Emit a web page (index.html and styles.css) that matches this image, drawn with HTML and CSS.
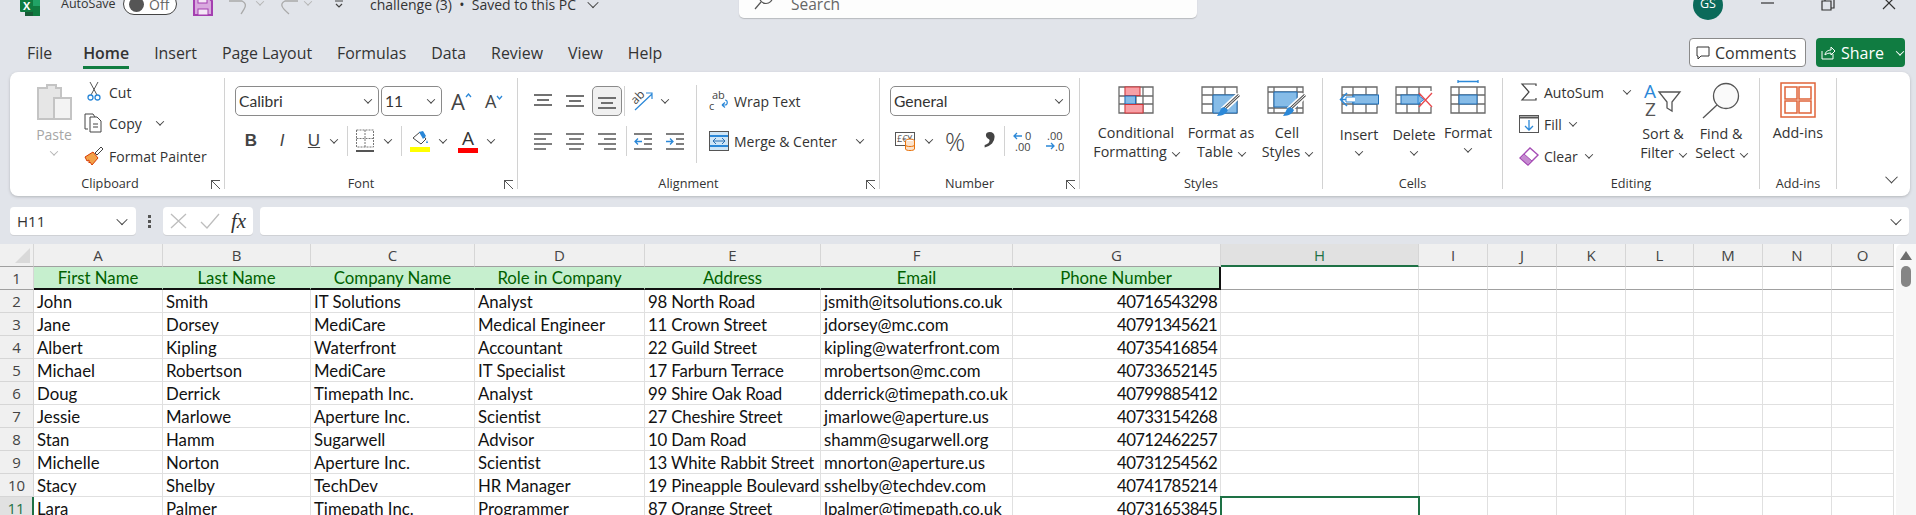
FILE: index.html
```html
<!DOCTYPE html>
<html lang="en">
<head>
  <meta charset="UTF-8" />
  <title>challenge (3) - Excel</title>
  <link rel="stylesheet" href="styles.css">
</head>
<body>
  <!-- title bar, cut off at the top of the window -->
  <div class="titlebar">
    <svg class="xl-logo" width="20" height="16" viewBox="0 0 20 16"><rect x="5" y="-4" width="15" height="20" rx="1" fill="#21a366"/><rect x="12" y="6" width="8" height="10" fill="#107c41"/><rect x="5" y="10" width="8" height="6" fill="#185c37"/><rect y="-2" width="13" height="14" rx="1" fill="#107c41"/><text x="3" y="10" font-size="11" font-weight="700" fill="#fff" font-family="Open Sans">X</text></svg>
    <span class="autosave">AutoSave</span>
    <span class="toggle"><i></i>Off</span>
    <svg class="save" width="20" height="16" viewBox="0 0 20 16"><path d="M1 -3h14l4 4v14H1z" fill="#d9a9df" stroke="#a43fb0" stroke-width="2"/><rect x="5" y="9" width="10" height="6" fill="#f4e6f6" stroke="#a43fb0"/><rect x="5" y="-3" width="9" height="6" fill="#f4e6f6" stroke="#a43fb0"/></svg>
    <svg class="undo" width="20" height="15" viewBox="0 0 20 15"><path d="M1 1h13c6 3 3 7-1 13" fill="none" stroke="#a9a9a9" stroke-width="1.3"/></svg>
    <span class="chev faded undo-chev"></span>
    <svg class="redo" width="21" height="15" viewBox="0 0 21 15"><path d="M20 1H7C1 4 4 8 11 14" fill="none" stroke="#a9a9a9" stroke-width="1.3"/></svg>
    <span class="chev faded redo-chev"></span>
    <svg class="customise" width="10" height="10" viewBox="0 0 10 10"><path d="M1 1h8M2 4l3 3 3-3" fill="none" stroke="#444" stroke-width="1.2"/></svg>
    <span class="doc-title">challenge (3) &nbsp;•&nbsp; Saved to this PC</span>
    <span class="chev title-chev"></span>
    <div class="searchbox">
      <svg width="20" height="18" viewBox="0 0 20 18"><circle cx="12" cy="3" r="6.5" fill="none" stroke="#555" stroke-width="1.2"/><path d="M7 8l-6 7" stroke="#555" stroke-width="1.2"/></svg>
      <span>Search</span>
    </div>
    <div class="avatar">GS</div>
    <svg class="win-min" width="14" height="6" viewBox="0 0 14 6"><path d="M0 3h13" stroke="#333" stroke-width="1.2"/></svg>
    <svg class="win-max" width="14" height="12" viewBox="0 0 14 12"><path d="M3 -1v-1M1 1h9v9H1z M4 1V-1h9v9h-3" transform="translate(0 1)" fill="none" stroke="#333" stroke-width="1.2"/></svg>
    <svg class="win-close" width="14" height="12" viewBox="0 0 14 12"><path d="M1 -2l12 12M13 -2L1 10" stroke="#333" stroke-width="1.2"/></svg>
  </div>

  <!-- tabs -->
  <div class="tabrow">
    <a class="tab t-file">File</a>
    <a class="tab t-home active">Home</a>
    <a class="tab">Insert</a>
    <a class="tab">Page Layout</a>
    <a class="tab">Formulas</a>
    <a class="tab">Data</a>
    <a class="tab">Review</a>
    <a class="tab">View</a>
    <a class="tab">Help</a>
    <button class="comments">
      <svg width="14" height="14" viewBox="0 0 14 14"><path d="M1 1h12v9H5l-3 3v-3H1z" fill="none" stroke="#333"/></svg>Comments
    </button>
    <button class="share">
      <svg width="15" height="15" viewBox="0 0 15 15"><path d="M1 6v8h11V9M4 10c0-3 3-5 6-5V2l4 4-4 4V8c-3 0-5 1-6 2z" fill="none" stroke="#fff"/></svg>Share<span class="chev light"></span>
    </button>
  </div>

  <!-- ribbon -->
  <div class="ribbon">
    <section class="group g-clipboard">
      <div class="group-body clip-body">
        <div class="paste">
          <svg width="34" height="36" viewBox="0 0 34 36"><path d="M1 5h9V2h9v3h5v31H1z" fill="#e6e6e6" stroke="#c4c4c4" stroke-width="2"/><rect x="17" y="15" width="17" height="21" fill="#f3f3f3" stroke="#c4c4c4" stroke-width="2"/></svg>
          <span>Paste</span>
          <span class="chev faded"></span>
        </div>
        <div class="clip-col">
          <div class="row"><svg class="cut-ico" width="14" height="19" viewBox="0 0 14 19"><path d="M3 0l7 13M11 0L4 13" stroke="#555" fill="none"/><circle cx="3.5" cy="15.5" r="2.5" fill="none" stroke="#2b88d8" stroke-width="1.3"/><circle cx="10.5" cy="15.5" r="2.5" fill="none" stroke="#2b88d8" stroke-width="1.3"/></svg><span>Cut</span></div>
          <div class="row"><svg width="20" height="20" viewBox="0 0 20 20"><path d="M4 16H1V1h8l2 3" fill="none" stroke="#444"/><path d="M6 4h7l4 4v11H6z" fill="#fff" stroke="#444"/><path d="M9 11h5M9 14h5" stroke="#444"/></svg><span>Copy</span><span class="chev copy-chev"></span></div>
          <div class="row"><svg width="20" height="20" viewBox="0 0 20 20"><path d="M1 11l8-5 5 6-6 7-2-3-1 1 0-3-2 1z" fill="#f2a24a" stroke="#d83b01"/><path d="M11 7l6-6 2 2-6 6z" fill="none" stroke="#444"/></svg><span>Format Painter</span></div>
        </div>
      </div>
      <div class="group-label">Clipboard</div>
      <span class="launcher"></span>
    </section>

    <section class="group g-font">
      <div class="group-body stack">
        <div class="row ctl-row">
          <div class="select font-name">Calibri<span class="chev"></span></div>
          <div class="select font-size">11<span class="chev"></span></div>
          <span class="size-btn big-a">A<svg width="7" height="5" viewBox="0 0 7 5"><path d="M1 4l2.5-3L6 4" fill="none" stroke="#2b88d8" stroke-width="1.3"/></svg></span>
          <span class="size-btn small-a">A<svg width="7" height="5" viewBox="0 0 7 5"><path d="M1 1l2.5 3L6 1" fill="none" stroke="#2b88d8" stroke-width="1.3"/></svg></span>
        </div>
        <div class="row ctl-row font-fmt">
          <b class="fmt fmt-b">B</b>
          <i class="fmt fmt-i">I</i>
          <u class="fmt fmt-u">U</u>
          <span class="chev"></span>
          <span class="vsep"></span>
          <svg class="borders" width="18" height="24" viewBox="0 0 18 24"><path d="M.5 1h17v17H.5zM9 1v17M.5 9.500h17" fill="none" stroke="#777" stroke-dasharray="2 1"/><path d="M0 22h18" stroke="#555" stroke-width="2"/></svg>
          <span class="chev"></span>
          <span class="vsep"></span>
          <div class="color-btn">
            <svg width="18" height="14" viewBox="0 0 18 14"><path d="M2 7l7-6 6 7-5 5z" fill="#fff" stroke="#444"/><path d="M8 1l4-1 3 5-3 3z" fill="#2b88d8"/><path d="M16 9l1 3h-2z" fill="#2b88d8"/></svg>
            <span class="bar yellow"></span>
          </div>
          <span class="chev"></span>
          <div class="color-btn font-color">
            <span class="color-a">A</span>
            <span class="bar red"></span>
          </div>
          <span class="chev"></span>
        </div>
      </div>
      <div class="group-label">Font</div>
      <span class="launcher"></span>
    </section>

    <section class="group g-align">
      <div class="group-body align-body">
        <div class="stack align-left">
          <div class="row ctl-row">
            <svg class="ln" width="18" height="16" viewBox="0 0 18 16"><path d="M0 2h18M3 7h12M0 12h18" stroke="#444" stroke-width="1.300"/></svg>
            <svg class="ln" width="18" height="16" viewBox="0 0 18 16"><path d="M0 3h18M3 8h12M0 13h18" stroke="#444" stroke-width="1.300"/></svg>
            <span class="pressed"><svg width="18" height="16" viewBox="0 0 18 16"><path d="M0 5h18M3 10h12M0 15h18" stroke="#444" stroke-width="1.300"/></svg></span>
            <span class="vsep"></span>
            <svg class="orient" width="21" height="20" viewBox="0 0 21 20"><text x="1" y="10" font-size="12" fill="#444" font-family="Open Sans" transform="rotate(-45 7 9)">ab</text><path d="M3 19L20 3M14 2h6v6" fill="none" stroke="#2b88d8" stroke-width="1.200"/></svg>
            <span class="chev"></span>
          </div>
          <div class="row ctl-row">
            <svg class="ln" width="18" height="18" viewBox="0 0 18 18"><path d="M0 2h18M0 7h12M0 12h18M0 17h12" stroke="#555" stroke-width="1.300"/></svg>
            <svg class="ln" width="18" height="18" viewBox="0 0 18 18"><path d="M0 2h18M3 7h12M0 12h18M3 17h12" stroke="#555" stroke-width="1.300"/></svg>
            <svg class="ln" width="18" height="18" viewBox="0 0 18 18"><path d="M0 2h18M6 7h12M0 12h18M6 17h12" stroke="#555" stroke-width="1.300"/></svg>
            <span class="vsep"></span>
            <svg class="dent" width="18" height="18" viewBox="0 0 18 18"><path d="M0 2h18M10 7h8M10 12h8M0 17h18" stroke="#555" stroke-width="1.300"/><path d="M8 9.500H1M4 6.500L1 9.500l3 3" fill="none" stroke="#2b88d8" stroke-width="1.300"/></svg>
            <svg class="dent" width="18" height="18" viewBox="0 0 18 18"><path d="M0 2h18M10 7h8M10 12h8M0 17h18" stroke="#555" stroke-width="1.300"/><path d="M0 9.500h7M4 6.500l3 3-3 3" fill="none" stroke="#2b88d8" stroke-width="1.300"/></svg>
          </div>
        </div>
        <span class="vsep tall"></span>
        <div class="wrap-col">
          <div class="row wrap-row"><svg width="20" height="22" viewBox="0 0 20 22"><text x="3" y="9" font-size="11" fill="#444" font-family="Open Sans">ab</text><text x="0" y="20" font-size="11" fill="#444" font-family="Open Sans">c</text><path d="M13 15h3c3 0 3-5 0-5M13 15l3-2.500M13 15l3 2.500" fill="none" stroke="#2b88d8" stroke-width="1.200"/></svg><span>Wrap Text</span></div>
          <div class="row wrap-row"><svg width="20" height="20" viewBox="0 0 20 20"><rect x=".5" y=".5" width="19" height="19" fill="#cfe6f7" stroke="#555"/><path d="M1 5h18M1 15h18" stroke="#2b88d8" stroke-width="2"/><path d="M4 10h12M7 7l-3 3 3 3M13 7l3 3-3 3" fill="none" stroke="#2b6fb0"/></svg><span>Merge &amp; Center</span><span class="chev merge-chev"></span></div>
        </div>
      </div>
      <div class="group-label">Alignment</div>
      <span class="launcher"></span>
    </section>

    <section class="group g-number">
      <div class="group-body stack">
        <div class="row ctl-row"><div class="select number-format">General<span class="chev"></span></div></div>
        <div class="row ctl-row num-fmt">
          <svg width="21" height="20" viewBox="0 0 21 20"><rect x=".5" y="1.500" width="19" height="13" fill="#fff" stroke="#555"/><text x="2" y="11" font-size="9" fill="#555" font-family="Open Sans">£€¥</text><ellipse cx="15" cy="10" rx="4.500" ry="2" fill="#fff" stroke="#e8730c"/><path d="M10.500 10v8c0 2 9 2 9 0v-8M10.500 14c0 2 9 2 9 0" fill="#fbe3cd" stroke="#e8730c"/></svg>
          <span class="chev"></span>
          <span class="percent">%</span>
          <span class="comma">,</span>
          <span class="vsep"></span>
          <svg width="20" height="22" viewBox="0 0 20 22"><path d="M9 6H1M4 3L1 6l3 3" fill="none" stroke="#2b88d8" stroke-width="1.300"/><text x="12" y="10" font-size="11" fill="#444" font-family="Open Sans">0</text><text x="2" y="21" font-size="11" fill="#444" font-family="Open Sans">.00</text></svg>
          <svg width="20" height="22" viewBox="0 0 20 22"><text x="2" y="10" font-size="11" fill="#444" font-family="Open Sans">.00</text><path d="M1 16h8M6 13l3 3-3 3" fill="none" stroke="#2b88d8" stroke-width="1.300"/><text x="10" y="21" font-size="11" fill="#444" font-family="Open Sans">.0</text></svg>
        </div>
      </div>
      <div class="group-label">Number</div>
      <span class="launcher"></span>
    </section>

    <section class="group g-styles">
      <div class="group-body bigs">
        <div class="big w-cond">
          <svg width="36" height="28" viewBox="0 0 36 28"><path d="M1 1h34v26H1zM1 10h34M1 18h34M7.500 1v26M18 1v26M25 1v26" fill="none" stroke="#6a6a6a" stroke-width="1.300"/><rect x="7" y="1" width="15" height="8.500" fill="#f8a0a6" stroke="#d13438"/><rect x="7" y="10" width="10.500" height="8" fill="#86bce8" stroke="#1f6fb8"/><rect x="7" y="18.500" width="18" height="8.500" fill="#f8a0a6" stroke="#d13438"/></svg>
          <p>Conditional<br>Formatting<span class="chev"></span></p>
        </div>
        <div class="big w-table">
          <svg width="40" height="34" viewBox="0 0 40 34"><path d="M1 1h35v26H1zM1 9h35M1 18h35M12 1v26M24 1v26" fill="none" stroke="#6a6a6a" stroke-width="1.300"/><path d="M12 9h24v18H12z" fill="#86bce8" stroke="#1f6fb8"/><path d="M38 9L22 24" stroke="#fff" stroke-width="6"/><path d="M38 9L23 23" stroke="#555" stroke-width="3"/><path d="M38 9L23 23" stroke="#fff" stroke-width="1"/><path d="M25 22c-3-2-5 0-6 3l-3 5c6 0 10-3 11-6z" fill="#2b88d8"/></svg>
          <p>Format as<br>Table<span class="chev"></span></p>
        </div>
        <div class="big w-cell">
          <svg width="40" height="34" viewBox="0 0 40 34"><path d="M1 1h35v26H1zM1 6h35M1 22h35M7 1v26M30 1v26" fill="none" stroke="#6a6a6a" stroke-width="1.300"/><path d="M7 6h23v15H7z" fill="#86bce8" stroke="#1f6fb8"/><path d="M38 9L22 24" stroke="#fff" stroke-width="6"/><path d="M38 9L23 23" stroke="#555" stroke-width="3"/><path d="M38 9L23 23" stroke="#fff" stroke-width="1"/><path d="M25 22c-3-2-5 0-6 3l-3 5c6 0 10-3 11-6z" fill="#2b88d8"/></svg>
          <p>Cell<br>Styles<span class="chev"></span></p>
        </div>
      </div>
      <div class="group-label">Styles</div>
    </section>

    <section class="group g-cells">
      <div class="group-body bigs">
        <div class="big w-insert">
          <svg class="cell-ico" width="40" height="28" viewBox="0 0 40 28"><path d="M3 1h35v26H3zM3 9h35M3 18h35M14 1v26M27 1v26" fill="none" stroke="#6a6a6a" stroke-width="1.300"/><rect x="14" y="9" width="25.500" height="9" fill="#86bce8" stroke="#1f6fb8"/><path d="M16 13.500H2M8 7l-6.500 6.500L8 20" fill="none" stroke="#2b88d8" stroke-width="1.500"/><path d="M16 11H7v5h9" fill="#fff" stroke="#2b88d8"/></svg>
          <p class="low">Insert</p>
          <span class="chev under"></span>
        </div>
        <div class="big w-delete">
          <svg class="cell-ico" width="38" height="28" viewBox="0 0 38 28"><path d="M1 1h35v26H1zM1 9h35M1 18h35M12 1v26M24 1v26" fill="none" stroke="#6a6a6a" stroke-width="1.300"/><rect x="6" y="9" width="18" height="9" fill="#86bce8" stroke="#1f6fb8"/><rect x="26" y="5" width="12" height="16" fill="#fff"/><path d="M23 9l6 4.500-6 4.500z" fill="#86bce8" stroke="#2b88d8"/><path d="M24 7l13 14M37 7L24 21" stroke="#e8484d" stroke-width="1.300"/></svg>
          <p class="low">Delete</p>
          <span class="chev under"></span>
        </div>
        <div class="big w-format">
          <svg class="format-ico" width="36" height="34" viewBox="0 0 36 34"><path d="M8 1.500h20M8 0v3M28 0v3" stroke="#2b88d8" stroke-width="1.300" fill="none"/><path d="M1 7h34v26H1zM1 15h34M1 24h34M9 7v26M27 7v26" fill="none" stroke="#6a6a6a" stroke-width="1.300"/><rect x="9" y="15" width="18" height="9" fill="#86bce8" stroke="#1f6fb8"/></svg>
          <p>Format</p>
          <span class="chev under2"></span>
        </div>
      </div>
      <div class="group-label">Cells</div>
    </section>

    <section class="group g-editing">
      <div class="group-body edit-body">
        <div class="edit-col">
          <div class="row"><svg width="20" height="18" viewBox="0 0 20 18"><path d="M17 3V1H3l7 8-7 8h14v-2" fill="none" stroke="#444" stroke-width="1.200"/></svg><span>AutoSum</span><span class="chev sum-chev"></span></div>
          <div class="row"><svg width="20" height="18" viewBox="0 0 20 18"><rect x=".5" y=".5" width="19" height="17" fill="#fff" stroke="#555"/><path d="M0 2.500h20" stroke="#555" stroke-width="2"/><path d="M10 5v10M6 11l4 4 4-4" fill="none" stroke="#2b88d8" stroke-width="1.300"/></svg><span>Fill</span><span class="chev inline-chev"></span></div>
          <div class="row"><svg width="20" height="20" viewBox="0 0 20 20"><path d="M1 12L11 2l8 7-10 10z" fill="#fff" stroke="#a64db5" stroke-width="1.400"/><path d="M1 12l4-4 8 7-4 4z" fill="#c58ad0" stroke="#a64db5"/></svg><span>Clear</span><span class="chev inline-chev"></span></div>
        </div>
        <div class="big w-sort">
          <svg width="36" height="36" viewBox="0 0 36 36"><text x="0" y="15" font-size="19" fill="#2b88d8" font-family="Open Sans">A</text><text x="1" y="33" font-size="19" fill="#555" font-family="Open Sans">Z</text><path d="M15 9h21l-8 10v9l-5-3v-6z" fill="#fff" stroke="#555" stroke-width="1.300"/></svg>
          <p>Sort &amp;<br>Filter<span class="chev"></span></p>
        </div>
        <div class="big w-find">
          <svg width="38" height="36" viewBox="0 0 38 36"><circle cx="24" cy="13" r="12.500" fill="#fafafa" stroke="#555" stroke-width="1.300"/><path d="M15 22L1 35" stroke="#555" stroke-width="1.300"/></svg>
          <p>Find &amp;<br>Select<span class="chev"></span></p>
        </div>
      </div>
      <div class="group-label">Editing</div>
    </section>

    <section class="group g-addins">
      <div class="group-body bigs center">
        <div class="big">
          <svg class="addins-ico" width="36" height="36" viewBox="0 0 36 36"><path d="M1 1h34v34H1z" fill="none" stroke="#e0643a" stroke-width="1.500"/><path d="M5 5h12v12H5zM19 5h12v12H19zM5 19h12v12H5zM19 19h12v12H19z" fill="none" stroke="#e0643a" stroke-width="1.500"/></svg>
          <p>Add-ins</p>
        </div>
      </div>
      <div class="group-label">Add-ins</div>
    </section>

    <div class="collapse"><span class="chev wide"></span></div>
  </div>

  <!-- formula bar -->
  <div class="formulabar">
    <div class="namebox">H11<span class="chev dark"></span></div>
    <div class="grip"><i></i><i></i><i></i></div>
    <div class="fx-box">
      <svg width="18" height="16" viewBox="0 0 18 16"><path d="M1 1l15 14M16 1L1 15" stroke="#bdbdbd" stroke-width="1.300"/></svg>
      <svg width="20" height="16" viewBox="0 0 20 16"><path d="M1 9l6 6L19 1" fill="none" stroke="#bdbdbd" stroke-width="1.300"/></svg>
      <span class="fx">fx</span>
    </div>
    <div class="formula-input"><span class="chev dark"></span></div>
  </div>

  <!-- sheet -->
  <div class="sheet">
    <table class="grid">
      <colgroup>
        <col class="c-head"><col class="c-a"><col class="c-b"><col class="c-c"><col class="c-d"><col class="c-e"><col class="c-f"><col class="c-g"><col class="c-h"><col class="c-n"><col class="c-n"><col class="c-n"><col class="c-l"><col class="c-n"><col class="c-n"><col class="c-o">
      </colgroup>
      <tr class="letters">
        <th class="corner"><span></span></th><th>A</th><th>B</th><th>C</th><th>D</th><th>E</th><th>F</th><th>G</th><th class="sel-col">H</th><th>I</th><th>J</th><th>K</th><th>L</th><th>M</th><th>N</th><th>O</th>
      </tr>
      <tr class="head-row">
        <th>1</th><td class="good">First Name</td><td class="good">Last Name</td><td class="good">Company Name</td><td class="good">Role in Company</td><td class="good">Address</td><td class="good">Email</td><td class="good last">Phone Number</td><td></td><td></td><td></td><td></td><td></td><td></td><td></td><td></td>
      </tr>
      <tr><th>2</th><td>John</td><td>Smith</td><td>IT Solutions</td><td>Analyst</td><td class="addr">98 North Road</td><td>jsmith@itsolutions.co.uk</td><td class="num">40716543298</td><td></td><td></td><td></td><td></td><td></td><td></td><td></td><td></td></tr>
      <tr><th>3</th><td>Jane</td><td>Dorsey</td><td>MediCare</td><td>Medical Engineer</td><td class="addr">11 Crown Street</td><td>jdorsey@mc.com</td><td class="num">40791345621</td><td></td><td></td><td></td><td></td><td></td><td></td><td></td><td></td></tr>
      <tr><th>4</th><td>Albert</td><td>Kipling</td><td>Waterfront</td><td>Accountant</td><td class="addr">22 Guild Street</td><td>kipling@waterfront.com</td><td class="num">40735416854</td><td></td><td></td><td></td><td></td><td></td><td></td><td></td><td></td></tr>
      <tr><th>5</th><td>Michael</td><td>Robertson</td><td>MediCare</td><td>IT Specialist</td><td class="addr">17 Farburn Terrace</td><td>mrobertson@mc.com</td><td class="num">40733652145</td><td></td><td></td><td></td><td></td><td></td><td></td><td></td><td></td></tr>
      <tr><th>6</th><td>Doug</td><td>Derrick</td><td>Timepath Inc.</td><td>Analyst</td><td class="addr">99 Shire Oak Road</td><td>dderrick@timepath.co.uk</td><td class="num">40799885412</td><td></td><td></td><td></td><td></td><td></td><td></td><td></td><td></td></tr>
      <tr><th>7</th><td>Jessie</td><td>Marlowe</td><td>Aperture Inc.</td><td>Scientist</td><td class="addr">27 Cheshire Street</td><td>jmarlowe@aperture.us</td><td class="num">40733154268</td><td></td><td></td><td></td><td></td><td></td><td></td><td></td><td></td></tr>
      <tr><th>8</th><td>Stan</td><td>Hamm</td><td>Sugarwell</td><td>Advisor</td><td class="addr">10 Dam Road</td><td>shamm@sugarwell.org</td><td class="num">40712462257</td><td></td><td></td><td></td><td></td><td></td><td></td><td></td><td></td></tr>
      <tr><th>9</th><td>Michelle</td><td>Norton</td><td>Aperture Inc.</td><td>Scientist</td><td class="addr">13 White Rabbit Street</td><td>mnorton@aperture.us</td><td class="num">40731254562</td><td></td><td></td><td></td><td></td><td></td><td></td><td></td><td></td></tr>
      <tr><th>10</th><td>Stacy</td><td>Shelby</td><td>TechDev</td><td>HR Manager</td><td class="addr">19 Pineapple Boulevard</td><td>sshelby@techdev.com</td><td class="num">40741785214</td><td></td><td></td><td></td><td></td><td></td><td></td><td></td><td></td></tr>
      <tr><th class="sel-row">11</th><td>Lara</td><td>Palmer</td><td>Timepath Inc.</td><td>Programmer</td><td class="addr">87 Orange Street</td><td>lpalmer@timepath.co.uk</td><td class="num">40731653845</td><td class="selected"></td><td></td><td></td><td></td><td></td><td></td><td></td><td></td></tr>
    </table>
    <div class="vscroll">
      <svg width="12" height="9" viewBox="0 0 12 9"><path d="M6 0l6 9H0z" fill="#6e6e6e"/></svg>
      <span class="thumb"></span>
    </div>
  </div>
</body>
</html>
```

FILE: styles.css
```css
* {
  box-sizing: border-box;
}
html, body {
  margin: 0;
  height: 515px;
  overflow: hidden;
}
body {
  width: 1916px;
  background-color: #e1e4ea;
  font-family: "Open Sans", "Noto Sans", sans-serif;
  font-size: 14px;
  color: #333;
}
p {
  margin: 0;
}
svg {
  display: block;
  flex: none;
  overflow: visible;
}

/* small chevrons are used all over the ribbon */
.chev {
  display: inline-block;
  flex: none;
  width: 6px;
  height: 6px;
  border-right: 1.3px solid #444;
  border-bottom: 1.3px solid #444;
  transform: rotate(45deg) translate(-1px, -1px);
}
.chev.faded {
  border-color: #b5b5b5;
}
.chev.light {
  border-color: #fff;
  margin-left: 8px;
}
.chev.wide {
  width: 9px;
  height: 9px;
}
.chev.dark {
  width: 8px;
  height: 8px;
}

/* title bar */
.titlebar {
  display: flex;
  align-items: flex-start;
  height: 24px;
  padding-left: 20px;
  overflow: hidden;
}
.autosave {
  margin: -5px 0 0 21px;
  width: 62px;
  font-size: 12.5px;
}
.toggle {
  display: flex;
  align-items: center;
  width: 54px;
  height: 22px;
  margin-top: -7px;
  padding-left: 5px;
  border: 1px solid #444;
  border-radius: 11px;
  background: #fff;
  font-size: 14px;
  color: #666;
}
.toggle i {
  width: 15px;
  height: 15px;
  border-radius: 50%;
  background: #555;
  margin-right: 5px;
}
.save {
  margin-left: 16px;
}
.undo {
  margin-left: 15px;
}
.undo-chev {
  margin: 0 0 0 9px;
}
.redo {
  margin-left: 15px;
}
.redo-chev {
  margin-left: 6px;
}
.customise {
  margin: 0 0 0 23px;
}
.doc-title {
  margin: -5px 0 0 26px;
  width: 215px;
  font-size: 14px;
  white-space: nowrap;
}
.title-chev {
  margin: 0 0 0 4px;
  width: 8px;
  height: 8px;
}
.searchbox {
  display: flex;
  align-items: flex-start;
  width: 458px;
  height: 24px;
  margin-left: 142px;
  margin-top: -6px;
  padding: 0 0 0 15px;
  background: #fdfdfd;
  border-radius: 0 0 5px 5px;
  box-shadow: 0 1px 1px #b9bbbf;
  color: #666;
}
.searchbox span {
  margin: -1px 0 0 17px;
  font-size: 15.5px;
}
.avatar {
  width: 30px;
  height: 30px;
  margin: -10px 0 0 496px;
  padding-top: 5px;
  border-radius: 50%;
  background: #0b6a5a;
  color: #fff;
  text-align: center;
  font-size: 12.5px;
}
.win-min {
  margin: 0 0 0 38px;
}
.win-max {
  margin: -1px 0 0 46px;
}
.win-close {
  margin: -1px 0 0 47px;
}

/* tabs */
.tabrow {
  display: flex;
  align-items: flex-start;
  gap: 25px;
  height: 48px;
  padding: 14px 11px 0 27px;
}
.tab {
  height: 31px;
  line-height: 31px;
  font-size: 15.9px;
  color: #333;
}
.tab.t-home {
  margin-left: 6px;
  border-bottom: 3px solid #107c41;
  font-weight: 600;
}
.comments, .share {
  display: flex;
  align-items: center;
  height: 29px;
  border-radius: 4px;
  font: 16px "Open Sans", sans-serif;
}
.comments {
  width: 117px;
  margin-left: auto;
  padding: 0 0 0 6px;
  gap: 5px;
  background: #fff;
  border: 1px solid #8a8a8a;
  color: #333;
}
.share {
  width: 89px;
  margin-left: -15px;
  padding: 0 0 0 5px;
  gap: 5px;
  background: #107c41;
  border: none;
  color: #fff;
}

/* ribbon */
.ribbon {
  display: flex;
  width: 1900px;
  height: 124px;
  margin-left: 10px;
  padding-top: 6px;
  background: #fff;
  border-radius: 8px;
  box-shadow: 0 1px 3px #b4b6ba;
}
.group {
  position: relative;
  display: flex;
  flex-direction: column;
  flex: none;
  height: 111px;
  border-right: 1px solid #d2d2d2;
}
.g-clipboard { width: 215px; }
.g-font { width: 293px; }
.g-align { width: 362px; }
.g-number { width: 200px; }
.g-styles { width: 243px; }
.g-cells { width: 180px; }
.g-editing { width: 257px; }
.g-addins { width: 77px; }
.group-body {
  flex: 1;
}
.group-label {
  height: 14px;
  line-height: 16px;
  text-align: center;
  font-size: 12.7px;
  color: #333;
  padding-right: 20px;
}
.g-clipboard .group-label { padding-right: 14px; }
.g-styles .group-label, .g-cells .group-label, .g-editing .group-label, .g-addins .group-label { padding-right: 0; }
/* the little corner arrow of a group sits over its bottom right corner */
.launcher {
  position: absolute;
  right: 4px;
  bottom: 0;
  width: 9px;
  height: 9px;
  border-top: 1px solid #555;
  border-left: 1px solid #555;
  background: linear-gradient(45deg, transparent 44%, #555 44%, #555 56%, transparent 56%);
}
.row {
  display: flex;
  align-items: center;
}
.vsep {
  flex: none;
  width: 1px;
  height: 30px;
  background: #d2d2d2;
}
.vsep.tall {
  height: 78px;
  margin: 7px 0 0 0;
}

/* clipboard */
.clip-body {
  display: flex;
}
.paste {
  display: flex;
  flex-direction: column;
  align-items: center;
  width: 34px;
  margin: 5px 0 0 27px;
  color: #a6a6a6;
}
.paste span:nth-child(2) {
  margin-top: 6px;
}
.paste .chev {
  margin-top: 6px;
}
.clip-col {
  display: flex;
  flex-direction: column;
  gap: 3px;
  margin-left: 13px;
}
.clip-col .row {
  height: 28px;
  gap: 5px;
  white-space: nowrap;
}
.clip-col .row:last-child {
  margin-top: 2px;
}
.cut-ico {
  margin: -1px 3px 0 3px;
}
.copy-chev {
  margin-left: 10px;
}

/* font */
.stack {
  display: flex;
  flex-direction: column;
  gap: 10px;
  padding-top: 8px;
}
.ctl-row {
  height: 30px;
}
.select {
  display: flex;
  align-items: center;
  justify-content: space-between;
  height: 30px;
  padding: 0 7px 0 3px;
  background: #fff;
  border: 1px solid #8a8a8a;
  border-radius: 5px;
  font-family: "Lato", sans-serif;
  font-size: 15.6px;
}
.font-name {
  width: 144px;
  margin-left: 10px;
}
.font-size {
  width: 61px;
  margin-left: 2px;
}
.size-btn {
  display: flex;
  align-items: flex-start;
  line-height: 1;
  color: #444;
}
.size-btn svg {
  margin-top: 3px;
}
.big-a {
  margin-left: 9px;
  font-size: 22px;
}
.small-a {
  margin-left: 13px;
  font-size: 18px;
}
.font-fmt .fmt {
  width: 14px;
  text-align: center;
  font-family: "Liberation Sans", sans-serif;
  font-size: 17px;
  color: #444;
}
.fmt-b {
  margin-left: 19px;
}
.fmt-i {
  margin-left: 17px;
  font-family: "Liberation Serif", serif;
}
.fmt-u {
  margin-left: 18px;
}
.font-fmt .fmt-u + .chev {
  margin-left: 10px;
}
.font-fmt .vsep {
  margin: 0 8px 0 10px;
}
.font-fmt .borders + .chev {
  margin-left: 11px;
}
.color-btn {
  display: flex;
  flex-direction: column;
  align-items: center;
  width: 20px;
  gap: 2px;
}
.font-fmt .color-btn + .chev {
  margin-left: 10px;
}
.font-color {
  margin-left: 12px;
}
.color-a {
  height: 16px;
  line-height: 16px;
  font-size: 19px;
}
.bar {
  width: 20px;
  height: 5px;
}
.bar.yellow {
  background: #ffff00;
}
.bar.red {
  background: #ff0000;
}

/* alignment */
.align-body {
  display: flex;
}
.align-left {
  width: 178px;
  padding-left: 16px;
}
.align-left .ln {
  margin-right: 14px;
}
.pressed {
  display: flex;
  align-items: center;
  justify-content: center;
  width: 30px;
  height: 30px;
  margin-left: -6px;
  background: #f0f0f0;
  border: 1px solid #8a8a8a;
  border-radius: 5px;
}
.align-left .vsep {
  margin: 0 7px 0 2px;
}
.align-left .ln:nth-of-type(3) {
  margin-right: 8px;
}
.orient + .chev {
  margin-left: 9px;
}
.dent {
  margin-right: 14px;
}
.wrap-col {
  margin-left: 12px;
  padding-top: 8px;
  display: flex;
  flex-direction: column;
  gap: 10px;
}
.wrap-row {
  height: 30px;
  gap: 5px;
}
.merge-chev {
  margin-left: 15px;
}

/* number */
.number-format {
  width: 180px;
  margin-left: 10px;
}
.num-fmt {
  padding-left: 15px;
}
.num-fmt svg:first-child + .chev {
  margin-left: 10px;
}
.percent {
  margin-left: 13px;
  width: 24px;
  font-size: 25px;
  color: #444;
  font-weight: 300;
}
.comma {
  margin: -38px 0 0 15px;
  width: 12px;
  font-family: "Liberation Serif", serif;
  font-size: 50px;
  line-height: 50px;
  font-weight: 700;
  color: #444;
}
.num-fmt .vsep {
  margin: 0 8px 0 8px;
}
.num-fmt .vsep + svg + svg {
  margin-left: 12px;
}

/* big ribbon buttons */
.bigs {
  display: flex;
  padding-top: 8px;
}
.bigs.center {
  justify-content: center;
}
.big {
  display: flex;
  flex-direction: column;
  align-items: center;
  flex: none;
  text-align: center;
  font-size: 14.3px;
  line-height: 19px;
}
.big p {
  margin-top: 9px;
  white-space: nowrap;
}
.big p .chev {
  margin-left: 6px;
}
.big p.low {
  margin-top: 11px;
}
.big .chev.under {
  margin-top: 6px;
}
.big .chev.under2 {
  margin-top: 5px;
}
.g-styles .bigs {
  padding-left: 14px;
}
.w-cond { width: 84px; }
.w-table { width: 70px; margin-left: 8px; }
.w-cell { width: 58px; margin-left: 2px; }
.w-table svg, .w-cell svg {
  margin-bottom: -6px;
}
.g-cells .bigs {
  padding-left: 11px;
}
.w-insert { width: 50px; }
.w-delete { width: 56px; margin-left: 2px; }
.w-format { width: 50px; margin-left: 1px; }
.format-ico {
  margin: -6px 0 0 0;
}

/* editing */
.edit-body {
  display: flex;
}
.edit-col {
  display: flex;
  flex-direction: column;
  gap: 4px;
  width: 127px;
  padding-left: 16px;
  flex: none;
}
.edit-col .row {
  height: 28px;
  gap: 5px;
  white-space: nowrap;
}
.sum-chev {
  margin-left: 15px;
}
.inline-chev {
  margin-left: 3px;
}
.w-sort, .w-find {
  padding-top: 5px;
}
.w-sort {
  width: 66px;
}
.w-sort svg {
  margin-right: 3px;
}
.w-find {
  width: 50px;
}
.big.w-sort p, .big.w-find p {
  margin-top: 5px;
}
.addins-ico {
  margin-top: -4px;
  margin-bottom: -4px;
}
.collapse {
  flex: 1;
  display: flex;
  justify-content: flex-end;
  align-items: flex-end;
  height: 105px;
  padding-right: 14px;
}

/* formula bar */
.formulabar {
  display: flex;
  align-items: center;
  height: 28px;
  margin: 11px 7px 9px 10px;
}
.namebox, .fx-box, .formula-input {
  height: 28px;
  background: #fff;
  border-radius: 4px;
  box-shadow: 0 1px 0 #cfd1d5;
}
.namebox {
  display: flex;
  align-items: center;
  justify-content: space-between;
  width: 126px;
  padding: 0 10px 0 7px;
  font-size: 15px;
}
.grip {
  display: flex;
  flex-direction: column;
  gap: 2px;
  width: 27px;
  align-items: center;
}
.grip i {
  width: 3px;
  height: 3px;
  background: #555;
}
.fx-box {
  display: flex;
  align-items: center;
  gap: 12px;
  width: 90px;
  padding-left: 7px;
}
.fx {
  font-family: "Liberation Serif", serif;
  font-style: italic;
  font-size: 21px;
  color: #333;
  margin-left: -1px;
}
.formula-input {
  display: flex;
  justify-content: flex-end;
  align-items: center;
  flex: 1;
  margin-left: 7px;
  padding-right: 9px;
}

/* sheet */
.sheet {
  display: flex;
  height: 271px;
  overflow: hidden;
  background: #fff;
}
.grid {
  flex: none;
  width: 1894px;
  table-layout: fixed;
  border-collapse: separate;
  border-spacing: 0;
  font-family: "Lato", "Liberation Sans", sans-serif;
  font-size: 16.8px;
  color: #111;
}
.c-head { width: 34px; }
.c-a { width: 129px; }
.c-b { width: 148px; }
.c-c { width: 164px; }
.c-d { width: 170px; }
.c-e { width: 176px; }
.c-f { width: 192px; }
.c-g { width: 208px; }
.c-h { width: 198px; }
.c-n { width: 69px; }
.c-l { width: 68px; }
.c-o { width: 62px; }
.grid tr {
  height: 23px;
}
.grid td {
  height: 23px;
  padding: 0 0 0 3px;
  border-right: 1px solid #e0e0e0;
  border-bottom: 1px solid #e0e0e0;
  white-space: nowrap;
  overflow: visible;
  line-height: 21px;
}
.grid td.addr {
  letter-spacing: -0.15px;
}
.grid th {
  height: 23px;
  padding: 0;
  background: #f0f0f0;
  border-right: 1px solid #d6d6d6;
  border-bottom: 1px solid #d6d6d6;
  font-family: "Open Sans", sans-serif;
  font-weight: 400;
  font-size: 15px;
  color: #444;
}
.letters th {
  border-bottom: 1px solid #a0a0a0;
}
.letters .sel-col {
  background: #e1e1e1;
  border-bottom: 2px solid #1e7145;
  color: #1e7145;
}
.corner span {
  display: block;
  width: 0;
  height: 0;
  margin: 1px 3px 0 auto;
  border-left: 15px solid transparent;
  border-bottom: 15px solid #d9d9d9;
}
.head-row td {
  border-bottom: 1px solid #a0a0a0;
}
.head-row th {
  border-bottom: 1px solid #a0a0a0;
}
.grid td.good {
  padding: 1px 0 0 0;
  line-height: 20px;
  background: #c6efce;
  color: #006100;
  text-align: center;
  border-right-color: #c6efce;
  border-bottom: 2px solid #111;
}
.grid td.good.last {
  border-right: 2px solid #111;
}
.grid td.num {
  padding: 0 3px 0 0;
  text-align: right;
  letter-spacing: -0.65px;
}
.grid .sel-row {
  background: #e1e1e1;
  color: #1e7145;
  border-right: 2px solid #1e7145;
}
.grid td.selected {
  outline: 2px solid #1e7145;
  outline-offset: -1px;
}
.vscroll {
  display: flex;
  flex-direction: column;
  align-items: center;
  flex: 1;
  margin-left: 2px;
  padding: 7px 0 0 0;
  background: #f7f7f7;
  border-radius: 6px 0 0 0;
  gap: 6px;
}
.thumb {
  width: 10px;
  height: 21px;
  background: #858585;
  border-radius: 5px;
}
```
